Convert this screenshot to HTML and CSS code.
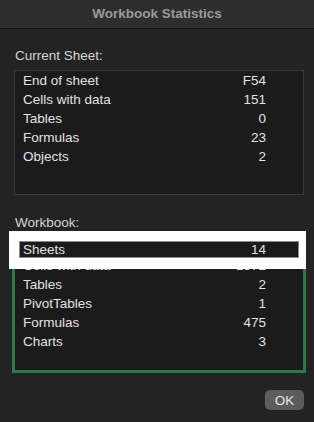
FILE: index.html
```html
<!DOCTYPE html>
<html lang="en">
<head>
    <meta charset="UTF-8">
    <meta name="viewport" content="width=device-width, initial-scale=1.0">
    <title>Workbook Statistics</title>
    <link rel="stylesheet" href="styles.css">
</head>
<body>

<div class="title-bar">Workbook Statistics</div>

<div class="content">
    <div class="section-label">Current Sheet:</div>
    <div class="stats-box current">
        <div class="row"><span>End of sheet</span><span>F54</span></div>
        <div class="row"><span>Cells with data</span><span>151</span></div>
        <div class="row"><span>Tables</span><span>0</span></div>
        <div class="row"><span>Formulas</span><span>23</span></div>
        <div class="row"><span>Objects</span><span>2</span></div>
    </div>

    <div class="section-label workbook-label">Workbook:</div>
    <div class="stats-box workbook">
        <!-- the Sheets row sits under the highlight -->
        <div class="row row-covered"><span>Sheets</span><span>14</span></div>
        <div class="row"><span>Cells with data</span><span>1572</span></div>
        <div class="row"><span>Tables</span><span>2</span></div>
        <div class="row"><span>PivotTables</span><span>1</span></div>
        <div class="row"><span>Formulas</span><span>475</span></div>
        <div class="row"><span>Charts</span><span>3</span></div>

        <div class="highlight">
            <div class="highlight-bar"><span>Sheets</span><span>14</span></div>
        </div>
    </div>

    <div class="buttons">
        <button class="ok-btn">OK</button>
    </div>
</div>

</body>
</html>
```

FILE: styles.css
```css
body {
    font-family: 'Liberation Sans', Arial, sans-serif;
    font-size: 13.5px;
    background-color: #232323;
    color: #dedede;
    margin: 0;
}
.title-bar {
    height: 28px;
    line-height: 28px;
    background-color: #2e2e2e;
    border-bottom: 1px solid #101010;
    text-align: center;
    font-weight: bold;
    color: #9a9a9a;
}
.content {
    padding: 0 10px 0 14px;
}
.section-label {
    margin-top: 19px;
    margin-left: 1px;
    line-height: 16px;
    color: #d6d6d6;
}
.workbook-label {
    margin-top: 20px;
}
.stats-box {
    background-color: #1b1b1b;
    border: 1px solid #3a3a3a;
    margin-top: 6px;
    padding-bottom: 28px;
}
.stats-box.workbook {
    position: relative;
    margin-top: 5px;
    padding-bottom: 19px;
    outline: 3px solid #2e7a45;
    outline-offset: -1px;
}
.row {
    display: flex;
    justify-content: space-between;
    line-height: 19px;
    padding: 0 37px 0 8px;
    color: #e2e2e2;
}
.row-covered {
    visibility: hidden;
}
.highlight {
    position: absolute;
    left: -6px;
    top: -6px;
    width: 280px;
    background-color: #fff;
    padding: 10px 7px 11px 10px;
}
.highlight-bar {
    display: flex;
    justify-content: space-between;
    background-color: #1b1b1b;
    border: 1px solid #8c8c8c;
    line-height: 15px;
    padding: 0 32px 0 3px;
    color: #e2e2e2;
}
.buttons {
    display: flex;
    justify-content: flex-end;
    margin-top: 19px;
}
.ok-btn {
    width: 39px;
    height: 20px;
    background-color: #5c5c5c;
    color: #e6e6e6;
    border: none;
    border-radius: 5px;
    font-family: 'Liberation Sans', Arial, sans-serif;
    font-size: 13.5px;
    padding: 0;
}
```
